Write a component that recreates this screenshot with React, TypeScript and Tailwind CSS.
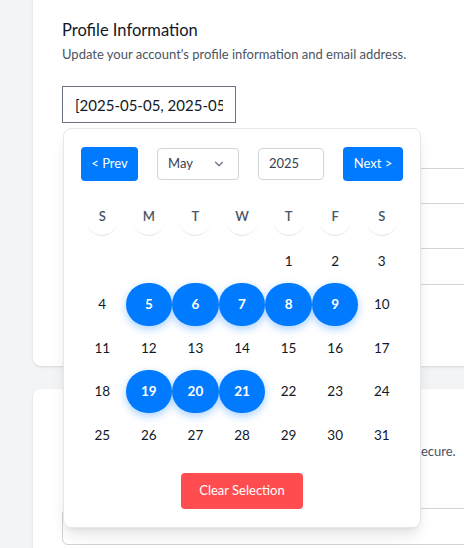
import React from "react";
import { ChevronDown } from "lucide-react";

const font = { fontFamily: "Lato, 'Open Sans', sans-serif" };

export default function App() {
  const selected = new Set([5, 6, 7, 8, 9, 19, 20, 21]);
  const cells: (number | null)[] = [null, null, null, null];
  for (let d = 1; d <= 31; d++) cells.push(d);
  const week = ["S", "M", "T", "W", "T", "F", "S"];

  return (
    <div className="w-[464px] h-[548px] overflow-hidden bg-[#f3f4f6]" style={font}>
      <div className="pl-[33px] flex flex-col">
        {/* Card 1 */}
        <div className="mt-[-8px] h-[374px] w-[520px] bg-white rounded-lg shadow-sm px-[29px] pt-6 flex flex-col">
          <h2 className="text-[16.5px] leading-7 font-normal text-[#111827]">Profile Information</h2>
          <p className="text-[13px] leading-5 text-[#4b5563]">
            Update your account's profile information and email address.
          </p>
          <div className="relative mt-[22px]">
            <input
              readOnly
              value="[2025-05-05, 2025-05-06, 2025-05-07, 2025-05-08, 2025-05-09, 2025-05-19, 2025-05-20, 2025-05-21]"
              className="w-[174px] h-[37px] border border-[#6b7280] px-3 text-[15px] text-[#111827] outline-none bg-white"
            />
            {/* Popover */}
            <div className="absolute left-[1px] top-full mt-[5px] w-[358px] bg-white border border-[#e5e7eb] rounded-lg shadow-lg px-[15px] pt-[18px] pb-[18px] z-10">
              <div className="flex items-center justify-between px-[2px]">
                <button className="w-[57px] h-[34px] rounded bg-[#007bff] text-white text-[13px]">&lt; Prev</button>
                <div className="w-[82px] h-[32px] rounded border border-[#d1d5db] flex items-center justify-between pl-[10px] pr-[12px] text-[13px] text-[#374151]">
                  <span>May</span>
                  <ChevronDown size={14} strokeWidth={2} className="text-[#6b7280]" />
                </div>
                <div className="w-[66px] h-[32px] rounded border border-[#d1d5db] flex items-center pl-[10px] text-[13px] text-[#374151]">
                  2025
                </div>
                <button className="w-[60px] h-[34px] rounded bg-[#007bff] text-white text-[13px]">Next &gt;</button>
              </div>
              <div className="grid grid-cols-7 mt-[23px]">
                {week.map((w, i) => (
                  <div key={i} className="flex justify-center">
                    <div className="w-8 h-8 rounded-full border-b border-[#e5e7eb] flex items-center justify-center pb-[5px] text-[13px] font-semibold text-[#4b5563]">
                      {w}
                    </div>
                  </div>
                ))}
              </div>
              <div className="grid grid-cols-7 auto-rows-[43.5px] mt-[3px]">
                {cells.map((d, i) =>
                  d === null ? (
                    <div key={i} />
                  ) : selected.has(d) ? (
                    <div key={i} className="rounded-full bg-[#007bff] text-white font-bold text-[13.5px] flex items-center justify-center shadow-[0_3px_8px_rgba(0,123,255,0.35)]">
                      {d}
                    </div>
                  ) : (
                    <div key={i} className="flex items-center justify-center text-[13.5px] text-[#111827]">
                      {d}
                    </div>
                  )
                )}
              </div>
              <div className="flex justify-center mt-4">
                <button className="h-9 px-[18px] rounded bg-[#ff4d4f] text-white text-[13px]">Clear Selection</button>
              </div>
            </div>
          </div>
          <label className="mt-4 ml-1 text-[13px] leading-5 font-medium text-[#374151]">Name</label>
          <div className="mt-[9px] ml-[2px] h-[36px] rounded-md border border-[#d1d5db]" />
          <label className="mt-5 ml-1 text-[13px] leading-5 font-medium text-[#374151]">Email</label>
          <div className="mt-[4px] ml-[2px] h-[37px] rounded-md border border-[#d1d5db]" />
        </div>
        {/* Card 2 */}
        <div className="mt-[23px] w-[520px] h-[200px] bg-white rounded-lg shadow-sm px-[29px] pt-6 flex flex-col">
          <h2 className="ml-1 text-[16.5px] leading-7 font-normal text-[#111827]">Update Password</h2>
          <p className="ml-[2px] text-[13px] leading-5 text-[#4b5563]">
            Ensure your account is using a long, random password to stay secure.
          </p>
          <label className="mt-4 ml-1 text-[13px] leading-5 font-medium text-[#374151]">Current Password</label>
          <div className="mt-[11px] h-[37px] w-full rounded-md border border-[#d1d5db]" />
        </div>
      </div>
    </div>
  );
}
